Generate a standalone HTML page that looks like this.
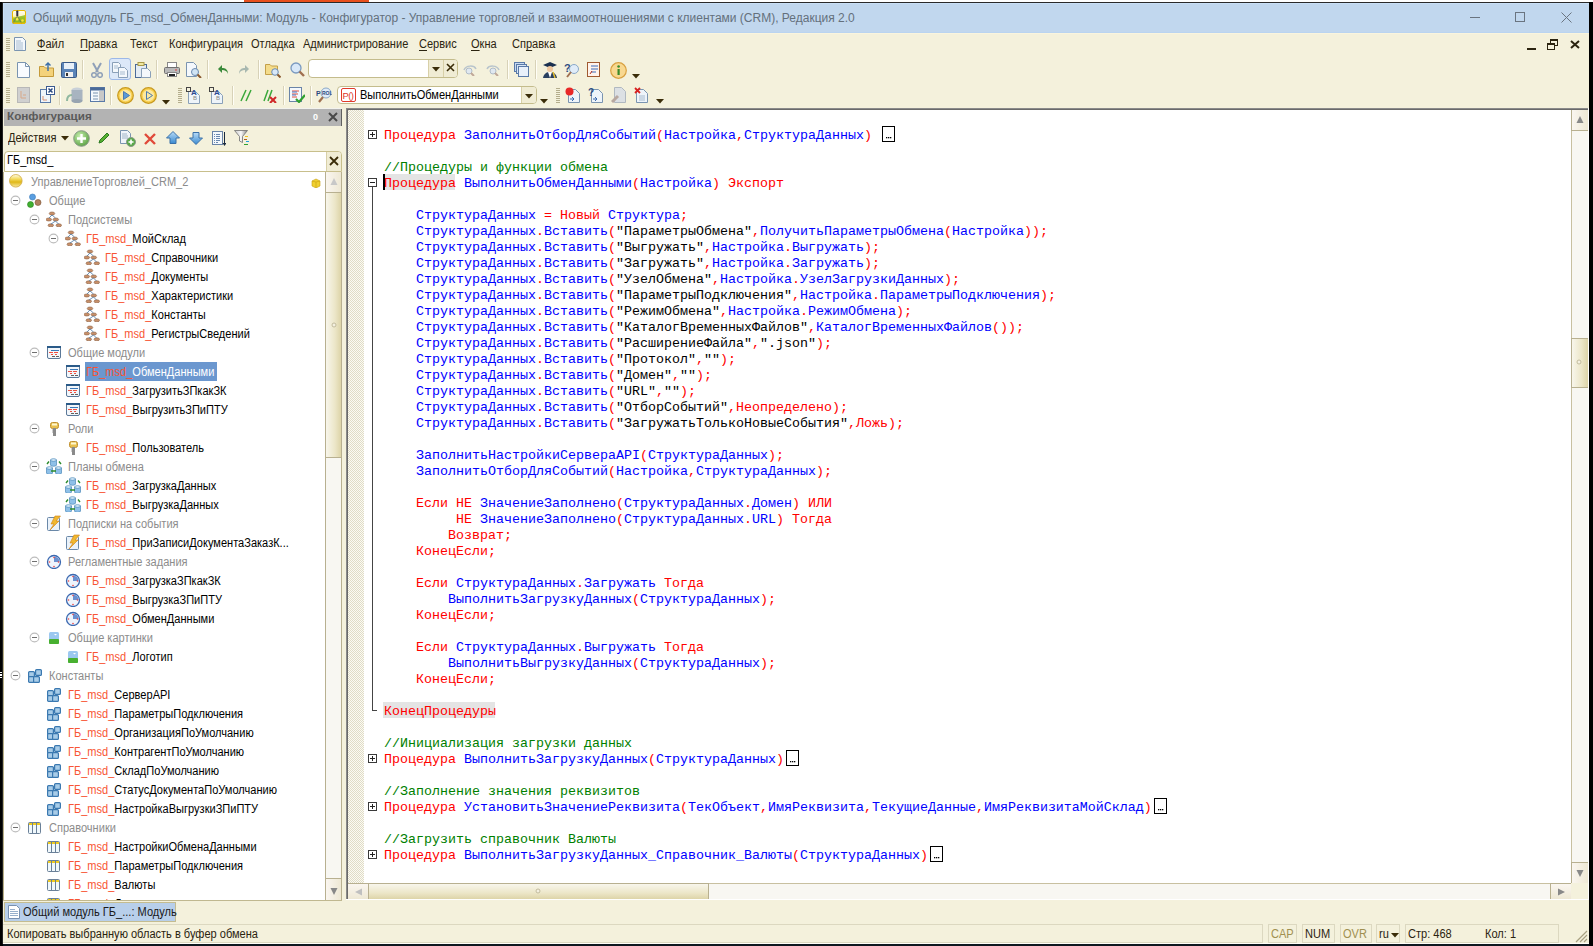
<!DOCTYPE html><html><head><meta charset="utf-8"><style>
*{margin:0;padding:0;box-sizing:border-box}
html,body{width:1593px;height:946px;overflow:hidden;background:#000}
body{position:relative;font-family:"Liberation Sans",sans-serif;font-size:11px;color:#000}
.t{position:absolute;white-space:nowrap}
.a{position:absolute}
.code{position:absolute;left:384px;font-family:"Liberation Mono",monospace;font-size:13.33px;line-height:16px;white-space:pre;color:#000}
.k{color:#f00}.i{color:#00f}.c{color:#008000}
.tr{position:absolute;height:19px;line-height:19px;white-space:nowrap;font-size:12px;transform:scaleX(.92);transform-origin:0 0}
.g{color:#8c8c8c}.r{color:#f85535}
.mn{position:absolute;top:37px;height:15px;line-height:15px;color:#2b2410;font-size:12px;transform:scaleX(.92);transform-origin:0 0}
.mn u{text-decoration:underline;text-decoration-thickness:1px;text-underline-offset:2px}
</style></head><body>
<div style="position:absolute;left:0px;top:0px;width:1593px;height:2px;background:#fff"></div>
<div style="position:absolute;left:244px;top:0px;width:125px;height:2px;background:#e8501e"></div>
<div style="position:absolute;left:0px;top:2px;width:1593px;height:1px;background:#2a2a2a"></div>
<div style="position:absolute;left:3px;top:3px;width:1586px;height:941px;background:#F4F1DC"></div>
<div style="position:absolute;left:0px;top:944px;width:1593px;height:2px;background:#0f1820"></div>
<div style="position:absolute;left:3px;top:3px;width:1586px;height:30px;background:#C1D7EE"></div>
<div style="position:absolute;left:3px;top:32px;width:1586px;height:1px;background:#BAD4F0"></div>
<div style="position:absolute;left:3px;top:33px;width:1586px;height:1px;background:#FAF5DE"></div>
<div style="position:absolute;left:3px;top:3px;width:1586px;height:1px;background:#C9E0F7"></div>
<div style="position:absolute;left:3px;top:3px;width:1px;height:30px;background:#C9E0F7"></div>
<div class="t" style="left:33px;top:11px;height:14px;line-height:14px;font-size:12px;color:#64707c">Общий модуль ГБ_msd_ОбменДанными: Модуль - Конфигуратор - Управление торговлей и взаимоотношениями с клиентами (CRM), Редакция 2.0</div>
<svg class="a" style="left:12px;top:10px" width="14" height="14" viewBox="0 0 14 14">
<defs><linearGradient id="ai" x1="0" y1="0" x2="0" y2="1"><stop offset="0" stop-color="#fffef0"/><stop offset=".45" stop-color="#fff4c0"/><stop offset=".5" stop-color="#e8e040"/><stop offset="1" stop-color="#60a818"/></linearGradient></defs>
<rect x=".5" y=".5" width="13" height="13" rx="1.5" fill="url(#ai)" stroke="#e8b800"/>
<path d="M1 9C4 6 8 7 13 5V13H1Z" fill="#88bc20" opacity=".8"/>
<circle cx="5" cy="9" r="1.6" fill="#f8f040"/><circle cx="10.5" cy="10.5" r="1.3" fill="#f8e040"/>
<rect x="4.3" y=".5" width="2" height="6" rx=".8" fill="#303040"/>
<path d="M4.8 6.5L1 13.5M5.8 6.5L9.5 13.5" stroke="#707060" stroke-width=".8"/>
<rect x="1" y="12.5" width="12" height="1" fill="#f0c000"/>
</svg>
<div style="position:absolute;left:1470px;top:17px;width:10px;height:1px;background:#6a7480"></div>
<div style="position:absolute;left:1515px;top:12px;width:10px;height:10px;border:1px solid #6a7480"></div>
<svg class="a" style="left:1561px;top:12px" width="11" height="11"><path d="M0.5 0.5L10.5 10.5M10.5 0.5L0.5 10.5" stroke="#6a7480" stroke-width="1"/></svg>
<div style="position:absolute;left:6px;top:38px;width:4px;height:1px;background:#b4ad8c"></div><div style="position:absolute;left:6px;top:40px;width:4px;height:1px;background:#b4ad8c"></div><div style="position:absolute;left:6px;top:42px;width:4px;height:1px;background:#b4ad8c"></div><div style="position:absolute;left:6px;top:44px;width:4px;height:1px;background:#b4ad8c"></div><div style="position:absolute;left:6px;top:46px;width:4px;height:1px;background:#b4ad8c"></div><div style="position:absolute;left:6px;top:48px;width:4px;height:1px;background:#b4ad8c"></div><div style="position:absolute;left:6px;top:50px;width:4px;height:1px;background:#b4ad8c"></div>
<svg class="a" style="left:14px;top:37px" width="12" height="14"><path d="M.5 .5H8.5L11.5 3.5V13.5H.5Z" fill="#f4f8fc" stroke="#7a94b0"/><path d="M2 4H7M2 6H9M2 8H9M2 10H9M2 12H9" stroke="#a8bcd0"/></svg>
<div class="mn" style="left:37px"><u>Ф</u>айл</div>
<div class="mn" style="left:80px"><u>П</u>равка</div>
<div class="mn" style="left:130px">Текст</div>
<div class="mn" style="left:169px">Конфигурация</div>
<div class="mn" style="left:251px">Отладка</div>
<div class="mn" style="left:303px">Администрирование</div>
<div class="mn" style="left:419px"><u>С</u>ервис</div>
<div class="mn" style="left:471px"><u>О</u>кна</div>
<div class="mn" style="left:512px">Сп<u>р</u>авка</div>
<div style="position:absolute;left:1527px;top:48px;width:9px;height:2px;background:#2b2410"></div>
<div style="position:absolute;left:1550px;top:39px;width:8px;height:7px;border:1px solid #2b2410;border-top-width:2px"></div>
<div style="position:absolute;left:1547px;top:43px;width:8px;height:7px;border:1px solid #2b2410;border-top-width:2px;background:#F4F1DC"></div>
<svg class="a" style="left:1570px;top:40px" width="10" height="9"><path d="M1 1L9 8M9 1L1 8" stroke="#2b2410" stroke-width="2"/></svg>
<div style="position:absolute;left:6px;top:62px;width:4px;height:1px;background:#b4ad8c"></div><div style="position:absolute;left:6px;top:64px;width:4px;height:1px;background:#b4ad8c"></div><div style="position:absolute;left:6px;top:66px;width:4px;height:1px;background:#b4ad8c"></div><div style="position:absolute;left:6px;top:68px;width:4px;height:1px;background:#b4ad8c"></div><div style="position:absolute;left:6px;top:70px;width:4px;height:1px;background:#b4ad8c"></div><div style="position:absolute;left:6px;top:72px;width:4px;height:1px;background:#b4ad8c"></div><div style="position:absolute;left:6px;top:74px;width:4px;height:1px;background:#b4ad8c"></div><div style="position:absolute;left:6px;top:76px;width:4px;height:1px;background:#b4ad8c"></div>
<div style="position:absolute;left:6px;top:88px;width:4px;height:1px;background:#b4ad8c"></div><div style="position:absolute;left:6px;top:90px;width:4px;height:1px;background:#b4ad8c"></div><div style="position:absolute;left:6px;top:92px;width:4px;height:1px;background:#b4ad8c"></div><div style="position:absolute;left:6px;top:94px;width:4px;height:1px;background:#b4ad8c"></div><div style="position:absolute;left:6px;top:96px;width:4px;height:1px;background:#b4ad8c"></div><div style="position:absolute;left:6px;top:98px;width:4px;height:1px;background:#b4ad8c"></div><div style="position:absolute;left:6px;top:100px;width:4px;height:1px;background:#b4ad8c"></div><div style="position:absolute;left:6px;top:102px;width:4px;height:1px;background:#b4ad8c"></div>
<svg class="a" style="left:17px;top:62px" width="13" height="16" viewBox="0 0 13 16"><path d="M.5 .5H8.5L12.5 4.5V15.5H.5Z" fill="#f8fbff" stroke="#7a94b0"/><path d="M8.5 .5V4.5H12.5" fill="none" stroke="#7a94b0"/></svg>
<svg class="a" style="left:39px;top:62px" width="15" height="15" viewBox="0 0 15 15"><path d="M.5 4.5H5L6.5 6H14.5V14.5H.5Z" fill="#f4d27a" stroke="#c49a3a"/><path d="M9 9V1M6.5 3.5L9 1L11.5 3.5" stroke="#3a6ea8" stroke-width="1.4" fill="none"/></svg>
<svg class="a" style="left:61px;top:62px" width="16" height="16" viewBox="0 0 16 16"><rect x=".5" y=".5" width="15" height="15" rx="1" fill="#5a84b8" stroke="#3a5a88"/><rect x="3" y="1" width="10" height="6" fill="#e8f0f8"/><rect x="4" y="10" width="8" height="5" fill="#f0f0f0"/><rect x="5" y="11" width="2" height="3" fill="#333"/></svg>
<div style="position:absolute;left:82px;top:60px;width:1px;height:19px;background:#d8d2b8"></div><div style="position:absolute;left:83px;top:60px;width:1px;height:19px;background:#fffef6"></div>
<svg class="a" style="left:91px;top:62px" width="12" height="16" viewBox="0 0 12 16"><path d="M2 1L7 10M10 1L5 10" stroke="#8fa0b8" stroke-width="2"/><circle cx="3" cy="13" r="2.3" fill="none" stroke="#8fa0b8" stroke-width="1.5"/><circle cx="9" cy="13" r="2.3" fill="none" stroke="#8fa0b8" stroke-width="1.5"/></svg>
<div style="position:absolute;left:109px;top:58px;width:22px;height:22px;background:#dce8f8;border:1px solid #9cb8e8;border-radius:3px"></div>
<svg class="a" style="left:112px;top:62px" width="16" height="16" viewBox="0 0 16 16"><path d="M.5 .5H6.5L8.5 2.5V10.5H.5Z" fill="#f4f8fc" stroke="#8aa0b8"/><path d="M6.5 5.5H12.5L15.5 8.5V15.5H6.5Z" fill="#f4f8fc" stroke="#8aa0b8"/><path d="M2 4H6M2 6H6M8 10H13M8 12H13" stroke="#a8bcd0"/></svg>
<svg class="a" style="left:135px;top:62px" width="16" height="16" viewBox="0 0 16 16"><rect x=".5" y="2.5" width="11" height="13" fill="#e4ecf4" stroke="#4a6a98"/><rect x="3" y=".5" width="6" height="3" fill="#f0e8a0" stroke="#a89848"/><path d="M6.5 6.5H12.5L15.5 9.5V15.5H6.5Z" fill="#f4f8fc" stroke="#8aa0b8"/></svg>
<div style="position:absolute;left:156px;top:60px;width:1px;height:19px;background:#d8d2b8"></div><div style="position:absolute;left:157px;top:60px;width:1px;height:19px;background:#fffef6"></div>
<svg class="a" style="left:164px;top:62px" width="16" height="15" viewBox="0 0 16 15"><rect x="3.5" y=".5" width="9" height="5" fill="#fff" stroke="#888"/><rect x=".5" y="5.5" width="15" height="6" rx="1" fill="#b8b8b8" stroke="#707070"/><rect x="3.5" y="10.5" width="9" height="4" fill="#fff" stroke="#888"/><rect x="5" y="12" width="6" height="2" fill="#222"/><circle cx="12" cy="8" r=".8" fill="#e03030"/></svg>
<svg class="a" style="left:186px;top:62px" width="16" height="16" viewBox="0 0 16 16"><path d="M.5 .5H7.5L10.5 3.5V14.5H.5Z" fill="#f4f8fc" stroke="#7a94b0"/><circle cx="9" cy="10" r="3.5" fill="#d0e4f4" stroke="#6a8ab0"/><path d="M11.5 12.5L15 16" stroke="#8a5a30" stroke-width="2"/></svg>
<div style="position:absolute;left:207px;top:60px;width:1px;height:19px;background:#d8d2b8"></div><div style="position:absolute;left:208px;top:60px;width:1px;height:19px;background:#fffef6"></div>
<svg class="a" style="left:218px;top:64px" width="11" height="11" viewBox="0 0 11 11"><path d="M10 10C10 5 7 4 4 4V1L0 5L4 9V6C7 6 9 7 10 10Z" fill="#3a8a3a"/></svg>
<svg class="a" style="left:238px;top:64px" width="11" height="11" viewBox="0 0 11 11"><path d="M1 10C1 5 4 4 7 4V1L11 5L7 9V6C4 6 2 7 1 10Z" fill="#a8b8b0"/></svg>
<div style="position:absolute;left:258px;top:60px;width:1px;height:19px;background:#d8d2b8"></div><div style="position:absolute;left:259px;top:60px;width:1px;height:19px;background:#fffef6"></div>
<svg class="a" style="left:265px;top:62px" width="16" height="16" viewBox="0 0 16 16"><path d="M.5 2.5H5L6.5 4H12.5V12.5H.5Z" fill="#f4dc8a" stroke="#c4a048"/><circle cx="10" cy="10" r="3.3" fill="#d8e8f8" stroke="#6a8ab0"/><path d="M12.5 12.5L15.5 15.5" stroke="#8a5a30" stroke-width="2"/></svg>
<svg class="a" style="left:290px;top:62px" width="15" height="15" viewBox="0 0 15 15"><circle cx="6" cy="6" r="5" fill="#d8e8f8" stroke="#7a9ac0" stroke-width="1.3"/><path d="M9.5 9.5L14 14" stroke="#a07050" stroke-width="2.4"/></svg>
<div style="position:absolute;left:308px;top:59px;width:150px;height:19px;background:#fff;border:1px solid #c4bc8c;border-radius:4px"></div>
<div style="position:absolute;left:428px;top:60px;width:1px;height:17px;background:#d8d0a8"></div>
<div style="position:absolute;left:429px;top:60px;width:14px;height:17px;background:#f0ecd4"></div>
<div style="position:absolute;left:443px;top:60px;width:1px;height:17px;background:#d8d0a8"></div>
<div style="position:absolute;left:444px;top:60px;width:13px;height:17px;background:#f0ecd4;border-radius:0 3px 3px 0"></div>
<svg class="a" style="left:432px;top:67px" width="8" height="5" viewBox="0 0 8 5"><path d="M0 0H8L4 4.5Z" fill="#3a2c08"/></svg>
<svg class="a" style="left:446px;top:63px" width="9" height="9" viewBox="0 0 9 9"><path d="M1 1L8 8M8 1L1 8" stroke="#3a2c08" stroke-width="1.6"/></svg>
<svg class="a" style="left:462px;top:64px" width="16" height="12" viewBox="0 0 16 12"><path d="M2 6C4 1 12 1 14 5" stroke="#b8c4cc" stroke-width="1.5" fill="none"/><circle cx="7" cy="7" r="3" fill="#e0e8f0" stroke="#b0bcc8"/><path d="M9 9L12 12" stroke="#c0a898" stroke-width="2"/></svg>
<svg class="a" style="left:485px;top:64px" width="16" height="12" viewBox="0 0 16 12"><path d="M2 5C4 1 12 1 14 6" stroke="#b8c4cc" stroke-width="1.5" fill="none"/><circle cx="8" cy="7" r="3" fill="#e0e8f0" stroke="#b0bcc8"/><path d="M10 9L13 12" stroke="#c0a898" stroke-width="2"/></svg>
<div style="position:absolute;left:507px;top:60px;width:1px;height:19px;background:#d8d2b8"></div><div style="position:absolute;left:508px;top:60px;width:1px;height:19px;background:#fffef6"></div>
<svg class="a" style="left:514px;top:62px" width="15" height="15" viewBox="0 0 15 15"><rect x=".5" y=".5" width="10" height="9" fill="#c8daf0" stroke="#5a7aa8"/><rect x="2.5" y="2.5" width="10" height="9" fill="#d8e6f6" stroke="#5a7aa8"/><rect x="4.5" y="4.5" width="10" height="10" fill="#e8f0fa" stroke="#5a7aa8"/></svg>
<div style="position:absolute;left:535px;top:60px;width:1px;height:19px;background:#d8d2b8"></div><div style="position:absolute;left:536px;top:60px;width:1px;height:19px;background:#fffef6"></div>
<svg class="a" style="left:542px;top:62px" width="16" height="16" viewBox="0 0 16 16"><path d="M1 3L8 0L15 3L8 6Z" fill="#1a3050"/><circle cx="8" cy="7" r="3" fill="#f0c8a0"/><path d="M1 16C2 11 5 10 8 10C11 10 14 11 15 16Z" fill="#2a4060"/><path d="M6 10L8 16L10 10" fill="#fff"/><path d="M11 10L13 16" stroke="#e8c030" stroke-width="1.5"/></svg>
<svg class="a" style="left:564px;top:62px" width="17" height="16" viewBox="0 0 17 16"><text x="0" y="10" font-family="Liberation Sans" font-weight="bold" font-size="11" fill="#2a4a80">?</text><circle cx="10" cy="7" r="4.5" fill="#e0ecf8" stroke="#8aa8c8"/><path d="M7 10L3 15" stroke="#a07050" stroke-width="2"/></svg>
<svg class="a" style="left:587px;top:62px" width="14" height="15" viewBox="0 0 14 15"><rect x=".5" y=".5" width="12" height="14" fill="#fff4ec" stroke="#a05a30"/><path d="M4 4H11M4 7H11M4 10H9" stroke="#3a6ab8"/><path d="M3 12L5 9" stroke="#c03020"/></svg>
<svg class="a" style="left:610px;top:62px" width="17" height="17" viewBox="0 0 17 17"><circle cx="8.5" cy="8.5" r="7.8" fill="#f8d890" stroke="#d8a040" stroke-width="1.2"/><rect x="7.5" y="7" width="2.2" height="6" fill="#3a8a2a"/><circle cx="8.6" cy="4.5" r="1.3" fill="#3a8a2a"/></svg>
<svg class="a" style="left:632px;top:74px" width="8" height="5" viewBox="0 0 8 5"><path d="M0 0H8L4 4.5Z" fill="#3a2c08"/></svg>
<svg class="a" style="left:17px;top:87px" width="13" height="16" viewBox="0 0 13 16"><rect x=".5" y=".5" width="12" height="15" fill="#d0d0d0" stroke="#b8b8b8"/><path d="M4 4V11H9M6 8H9" stroke="#d8a888" fill="none"/></svg>
<svg class="a" style="left:40px;top:86px" width="15" height="17" viewBox="0 0 15 17"><rect x=".5" y="3.5" width="10" height="13" fill="#eef4fa" stroke="#5a7aa8"/><rect x="6.5" y=".5" width="8" height="8" fill="#fff" stroke="#3a5a90"/><path d="M8.5 2.5L12.5 6.5M12.5 2.5L8.5 6.5" stroke="#2a4a80" stroke-width="1.5"/><path d="M3 10V14H7" stroke="#d89070" fill="none"/></svg>
<div style="position:absolute;left:59px;top:86px;width:1px;height:19px;background:#d8d2b8"></div><div style="position:absolute;left:60px;top:86px;width:1px;height:19px;background:#fffef6"></div>
<svg class="a" style="left:66px;top:87px" width="17" height="16" viewBox="0 0 17 16"><ellipse cx="11" cy="3" rx="5.5" ry="2.5" fill="#c8d0d8"/><rect x="5.5" y="3" width="11" height="11" fill="#a8b4c0"/><ellipse cx="11" cy="14" rx="5.5" ry="2" fill="#98a4b0"/><path d="M1 14C1 10 3 8 6 8" stroke="#90b8a0" stroke-width="2" fill="none"/></svg>
<svg class="a" style="left:90px;top:87px" width="15" height="15" viewBox="0 0 15 15"><rect x=".5" y=".5" width="14" height="14" fill="#f4f8fc" stroke="#5a7aa8"/><rect x=".5" y=".5" width="14" height="3" fill="#4a6a98"/><rect x="9" y="4" width="5" height="10" fill="#c8c8c8"/><path d="M3 6H8M3 9H8M3 12H8" stroke="#7a94b0"/></svg>
<div style="position:absolute;left:110px;top:86px;width:1px;height:19px;background:#d8d2b8"></div><div style="position:absolute;left:111px;top:86px;width:1px;height:19px;background:#fffef6"></div>
<svg class="a" style="left:117px;top:87px" width="17" height="17" viewBox="0 0 17 17"><circle cx="8.5" cy="8.5" r="7.8" fill="#f8d050" stroke="#c89a20" stroke-width="1.2"/><circle cx="8.5" cy="8.5" r="5.8" fill="#fce8a0"/><path d="M6.5 4.5L12.5 8.5L6.5 12.5Z" fill="#5a9ad8" stroke="#4a7ab0"/></svg>
<svg class="a" style="left:140px;top:87px" width="17" height="17" viewBox="0 0 17 17"><circle cx="8.5" cy="8.5" r="7.8" fill="#f8d050" stroke="#c89a20" stroke-width="1.2"/><circle cx="8.5" cy="8.5" r="5.8" fill="#fce8a0"/><path d="M6.5 4.5L12.5 8.5L6.5 12.5Z" fill="none" stroke="#4a7ab0"/></svg>
<svg class="a" style="left:162px;top:100px" width="8" height="5" viewBox="0 0 8 5"><path d="M0 0H8L4 4.5Z" fill="#3a2c08"/></svg>
<div style="position:absolute;left:178px;top:88px;width:4px;height:1px;background:#b4ad8c"></div><div style="position:absolute;left:178px;top:90px;width:4px;height:1px;background:#b4ad8c"></div><div style="position:absolute;left:178px;top:92px;width:4px;height:1px;background:#b4ad8c"></div><div style="position:absolute;left:178px;top:94px;width:4px;height:1px;background:#b4ad8c"></div><div style="position:absolute;left:178px;top:96px;width:4px;height:1px;background:#b4ad8c"></div><div style="position:absolute;left:178px;top:98px;width:4px;height:1px;background:#b4ad8c"></div><div style="position:absolute;left:178px;top:100px;width:4px;height:1px;background:#b4ad8c"></div><div style="position:absolute;left:178px;top:102px;width:4px;height:1px;background:#b4ad8c"></div>
<svg class="a" style="left:186px;top:87px" width="15" height="17" viewBox="0 0 15 17"><path d="M2.5 4.5H9.5L13.5 8.5V16.5H2.5Z" fill="#eef4fa" stroke="#8aa0b8"/><rect x=".5" y=".5" width="4" height="4" fill="none" stroke="#444"/><text x="5" y="8" font-family="Liberation Sans" font-weight="bold" font-size="8" fill="#2a4a90">A</text><text x="7" y="13" font-family="Liberation Sans" font-size="6" fill="#888">B</text></svg>
<svg class="a" style="left:209px;top:87px" width="15" height="17" viewBox="0 0 15 17"><path d="M2.5 4.5H9.5L13.5 8.5V16.5H2.5Z" fill="#eef4fa" stroke="#8aa0b8"/><rect x=".5" y=".5" width="4" height="4" fill="none" stroke="#444"/><text x="5" y="8" font-family="Liberation Sans" font-weight="bold" font-size="8" fill="#2a4a90">A</text><text x="7" y="13" font-family="Liberation Sans" font-size="6" fill="#888">B</text></svg>
<div style="position:absolute;left:232px;top:86px;width:1px;height:19px;background:#d8d2b8"></div><div style="position:absolute;left:233px;top:86px;width:1px;height:19px;background:#fffef6"></div>
<svg class="a" style="left:240px;top:89px" width="12" height="13" viewBox="0 0 12 13"><path d="M1 12L6 1M6 12L11 1" stroke="#3aa83a" stroke-width="1.5"/></svg>
<svg class="a" style="left:263px;top:89px" width="14" height="14" viewBox="0 0 14 14"><path d="M1 12L5 1M5 12L9 1" stroke="#3aa83a" stroke-width="1.5"/><path d="M7 8L13 14M13 8L7 14" stroke="#d02828" stroke-width="2"/></svg>
<div style="position:absolute;left:283px;top:86px;width:1px;height:19px;background:#d8d2b8"></div><div style="position:absolute;left:284px;top:86px;width:1px;height:19px;background:#fffef6"></div>
<svg class="a" style="left:289px;top:87px" width="16" height="16" viewBox="0 0 16 16"><rect x=".5" y=".5" width="12" height="14" fill="#f4f8fc" stroke="#6a84a8"/><path d="M3 4H10M3 7H9M3 10H8" stroke="#e05040"/><path d="M3 5H8M3 8H7" stroke="#4a7ac8"/><path d="M7 12L10 15L16 8" stroke="#30a030" stroke-width="2.2" fill="none"/></svg>
<div style="position:absolute;left:310px;top:86px;width:1px;height:19px;background:#d8d2b8"></div><div style="position:absolute;left:311px;top:86px;width:1px;height:19px;background:#fffef6"></div>
<svg class="a" style="left:316px;top:87px" width="16" height="16" viewBox="0 0 16 16"><text x="0" y="9" font-family="Liberation Sans" font-weight="bold" font-size="7" fill="#2a4a80">P</text><circle cx="10" cy="6" r="5" fill="#e0ecf8" stroke="#8aa8c8"/><text x="6" y="8" font-family="Liberation Sans" font-weight="bold" font-size="5" fill="#2a4a80">ROL</text><path d="M7 10L3 15" stroke="#a07050" stroke-width="2.2"/></svg>
<div style="position:absolute;left:337px;top:86px;width:200px;height:18px;background:#fff;border:1px solid #c4bc8c;border-radius:4px"></div>
<div style="position:absolute;left:521px;top:87px;width:1px;height:16px;background:#d8d0a8"></div>
<div style="position:absolute;left:522px;top:87px;width:14px;height:16px;background:#f0ecd4;border-radius:0 3px 3px 0"></div>
<svg class="a" style="left:525px;top:94px" width="8" height="5" viewBox="0 0 8 5"><path d="M0 0H8L4 4.5Z" fill="#3a2c08"/></svg>
<svg class="a" style="left:341px;top:88px" width="15" height="14" viewBox="0 0 15 14"><rect x=".5" y=".5" width="14" height="13" rx="1.5" fill="#fff" stroke="#e03a2a"/><text x="1.5" y="11" font-family="Liberation Sans" font-size="9.5" letter-spacing="-.6" fill="#e03a2a">P()</text></svg>
<div class="t" style="left:360px;top:88px;height:14px;line-height:14px;font-size:12px;transform:scaleX(.92);transform-origin:0 0;color:#000">ВыполнитьОбменДанными</div>
<svg class="a" style="left:540px;top:99px" width="8" height="5" viewBox="0 0 8 5"><path d="M0 0H8L4 4.5Z" fill="#3a2c08"/></svg>
<div style="position:absolute;left:556px;top:88px;width:4px;height:1px;background:#b4ad8c"></div><div style="position:absolute;left:556px;top:90px;width:4px;height:1px;background:#b4ad8c"></div><div style="position:absolute;left:556px;top:92px;width:4px;height:1px;background:#b4ad8c"></div><div style="position:absolute;left:556px;top:94px;width:4px;height:1px;background:#b4ad8c"></div><div style="position:absolute;left:556px;top:96px;width:4px;height:1px;background:#b4ad8c"></div><div style="position:absolute;left:556px;top:98px;width:4px;height:1px;background:#b4ad8c"></div><div style="position:absolute;left:556px;top:100px;width:4px;height:1px;background:#b4ad8c"></div><div style="position:absolute;left:556px;top:102px;width:4px;height:1px;background:#b4ad8c"></div>
<svg class="a" style="left:565px;top:87px" width="15" height="16" viewBox="0 0 15 16"><path d="M3.5 2.5H10.5L14.5 6.5V15.5H3.5Z" fill="#eef4fa" stroke="#7a94b0"/><circle cx="4.5" cy="4.5" r="4" fill="#e82828"/><path d="M5 12H9M7 10L9 12L7 14" stroke="#3a6ab0" fill="none"/></svg>
<svg class="a" style="left:588px;top:87px" width="15" height="16" viewBox="0 0 15 16"><path d="M3.5 2.5H10.5L14.5 6.5V15.5H3.5Z" fill="#eef4fa" stroke="#7a94b0"/><text x="0" y="9" font-family="Liberation Sans" font-weight="bold" font-size="10" fill="#2a4a80">?</text><path d="M5 12H9M7 10L9 12L7 14" stroke="#3a6ab0" fill="none"/></svg>
<svg class="a" style="left:611px;top:87px" width="15" height="16" viewBox="0 0 15 16"><path d="M3.5 .5H10.5L14.5 4.5V15.5H3.5Z" fill="#dce0e4" stroke="#b0b8c0"/><path d="M1 15L7 9" stroke="#b8a8a0" stroke-width="3"/></svg>
<svg class="a" style="left:634px;top:87px" width="14" height="16" viewBox="0 0 14 16"><path d="M2.5 2.5H9.5L13.5 6.5V15.5H2.5Z" fill="#eef4fa" stroke="#7a94b0"/><path d="M1 1L6 6M6 1L1 6" stroke="#d82020" stroke-width="1.8"/><path d="M5 9H11M5 11H11M5 13H11" stroke="#a8bcd0"/></svg>
<svg class="a" style="left:656px;top:99px" width="8" height="5" viewBox="0 0 8 5"><path d="M0 0H8L4 4.5Z" fill="#3a2c08"/></svg>
<div style="position:absolute;left:4px;top:108px;width:338px;height:1px;background:#f2f2ee"></div>
<div style="position:absolute;left:4px;top:109px;width:338px;height:17px;background:#B3B3B3"></div>
<div style="position:absolute;left:341px;top:109px;width:1px;height:17px;background:#606060"></div>
<div class="t" style="left:7px;top:108px;height:15px;line-height:15px;font-weight:bold;font-size:11.7px;color:#5a5a5a">Конфигурация</div>
<div class="t" style="left:313px;top:110px;height:14px;line-height:14px;font-size:9px;color:#fff;font-weight:bold">0</div>
<svg class="a" style="left:328px;top:112px" width="10" height="10" viewBox="0 0 10 10"><path d="M1 1L9 9M9 1L1 9" stroke="#4a4a4a" stroke-width="2"/></svg>
<div class="t" style="left:8px;top:131px;height:14px;line-height:14px;font-size:12px;transform:scaleX(.92);transform-origin:0 0;color:#2b2410">Действия</div>
<svg class="a" style="left:61px;top:136px" width="8" height="5" viewBox="0 0 8 5"><path d="M0 0H8L4 4.5Z" fill="#3a2c08"/></svg>
<svg class="a" style="left:73px;top:130px" width="17" height="17" viewBox="0 0 17 17"><defs><radialGradient id="gp" cx=".4" cy=".35" r=".7"><stop offset="0" stop-color="#c8f0b0"/><stop offset="1" stop-color="#58a040"/></radialGradient></defs><circle cx="8.5" cy="8.5" r="7.8" fill="url(#gp)" stroke="#8a9a8a"/><path d="M8.5 4V13M4 8.5H13" stroke="#fff" stroke-width="2.4"/></svg>
<svg class="a" style="left:98px;top:132px" width="12" height="12" viewBox="0 0 12 12"><path d="M1 11L2 8L9 1L11 3L4 10Z" fill="#58b030" stroke="#2a7a20"/></svg>
<svg class="a" style="left:120px;top:130px" width="16" height="17" viewBox="0 0 16 17"><path d="M.5 .5H7.5L10.5 3.5V13.5H.5Z" fill="#f0f4fa" stroke="#7a94b0"/><path d="M2 4H7M2 6H8M2 8H8" stroke="#a0b4c8"/><circle cx="11" cy="12" r="4.5" fill="#58a848" stroke="#8a9a8a"/><path d="M11 9.5V14.5M8.5 12H13.5" stroke="#fff" stroke-width="1.6"/></svg>
<svg class="a" style="left:144px;top:133px" width="12" height="12" viewBox="0 0 12 12"><path d="M1 1L11 11M11 1L1 11" stroke="#e04a3a" stroke-width="2.4"/></svg>
<svg class="a" style="left:166px;top:131px" width="14" height="13" viewBox="0 0 14 13"><defs><linearGradient id="ag" x1="0" y1="0" x2="0" y2="1"><stop offset="0" stop-color="#b8dcf8"/><stop offset="1" stop-color="#3a8ad0"/></linearGradient></defs><path d="M7 .5L13.5 7H10V12.5H4V7H.5Z" fill="url(#ag)" stroke="#3a70a8"/></svg>
<svg class="a" style="left:189px;top:132px" width="14" height="13" viewBox="0 0 14 13"><path d="M7 12.5L13.5 6H10V.5H4V6H.5Z" fill="url(#ag)" stroke="#3a70a8"/></svg>
<svg class="a" style="left:212px;top:131px" width="14" height="16" viewBox="0 0 14 16"><rect x=".5" y=".5" width="10" height="13" fill="#f4f8fc" stroke="#6a84a8"/><path d="M2 3.5H3M4 3.5H8M2 5.5H3M4 5.5H8M2 7.5H3M4 7.5H8M2 9.5H3M4 9.5H8M2 11.5H3M4 11.5H6" stroke="#6a88b0"/><path d="M12.5 1V14" stroke="#1a2a40"/><path d="M10.5 12L12.5 15L14.5 12Z" fill="#1a2a40"/></svg>
<svg class="a" style="left:234px;top:130px" width="17" height="16" viewBox="0 0 17 16"><defs><linearGradient id="fg" x1="0" y1="0" x2="1" y2="0"><stop offset="0" stop-color="#c8c8c8"/><stop offset=".5" stop-color="#f8f8f8"/><stop offset="1" stop-color="#808080"/></linearGradient></defs><path d="M.5 .5H13.5L8.5 6.5V12.5L5.5 11V6.5Z" fill="url(#fg)" stroke="#707070" stroke-width=".8"/><path d="M11 6.5H14M10 9.5H13M12 11.5H15M10 14.5H14" stroke-width="1.2"/><path d="M11 6.5H14" stroke="#f0c020"/><path d="M10 9.5H13" stroke="#b06020"/><path d="M12 11.5H15" stroke="#20a0e0"/><path d="M10 14.5H14" stroke="#30a030"/></svg>
<div style="position:absolute;left:4px;top:151px;width:338px;height:21px;background:#fff;border:1px solid #c8bf8c;border-radius:4px 4px 0 0"></div>
<div class="t" style="left:7px;top:153px;height:15px;line-height:15px;font-size:12px;transform:scaleX(.92);transform-origin:0 0;color:#000">ГБ_msd_</div>
<div style="position:absolute;left:326px;top:152px;width:1px;height:19px;background:#d8d0a8"></div>
<div style="position:absolute;left:327px;top:152px;width:14px;height:19px;background:#f0ecd4;border-radius:0 3px 0 0"></div>
<svg class="a" style="left:329px;top:156px" width="10" height="10" viewBox="0 0 10 10"><path d="M1 1L9 9M9 1L1 9" stroke="#3a2c08" stroke-width="1.8"/></svg>
<div style="position:absolute;left:4px;top:172px;width:338px;height:729px;background:#fff"></div>
<div style="position:absolute;left:3px;top:900px;width:339px;height:1px;background:#c0b890"></div>
<div style="position:absolute;left:3px;top:172px;width:1px;height:728px;background:#b8b088"></div>
<div class="a" style="left:4px;top:172px;width:321px;height:728px;overflow:hidden">
<svg class="a" style="left:5px;top:2px" width="16" height="16" viewBox="0 0 16 16"><defs><linearGradient id="rg" x1="0" y1="0" x2="0" y2="1"><stop offset="0" stop-color="#fffce8"/><stop offset=".35" stop-color="#f4dc60"/><stop offset=".6" stop-color="#e0b818"/><stop offset="1" stop-color="#f8e8a0"/></linearGradient></defs><circle cx="6.8" cy="6.8" r="6.3" fill="url(#rg)" stroke="#d0a840" stroke-width=".8"/></svg>
<div class="tr g" style="left:26.5px;top:1px">УправлениеТорговлей_CRM_2</div>
<svg class="a" style="left:6px;top:23px" width="11" height="11"><circle cx="5.5" cy="5.5" r="4.4" fill="#fff" stroke="#bcbcbc" stroke-width="1.1"/><path d="M3 5.5H8" stroke="#707070"/></svg>
<svg class="a" style="left:23px;top:20px" width="16" height="16" viewBox="0 0 16 16"><circle cx="5.5" cy="5" r="3" fill="#5a9ee0" stroke="#3a7ab8" stroke-width=".6"/><circle cx="11" cy="10.5" r="3" fill="#b08060" stroke="#7a5030" stroke-width=".6"/><circle cx="3.5" cy="12.5" r="3" fill="#40b030" stroke="#288020" stroke-width=".6"/></svg>
<div class="tr g" style="left:45.0px;top:20px">Общие</div>
<svg class="a" style="left:25px;top:42px" width="11" height="11"><circle cx="5.5" cy="5.5" r="4.4" fill="#fff" stroke="#bcbcbc" stroke-width="1.1"/><path d="M3 5.5H8" stroke="#707070"/></svg>
<svg class="a" style="left:42px;top:39px" width="16" height="16" viewBox="0 0 16 16"><g fill="#c8906a" stroke="#8a5a3a" stroke-width=".6"><ellipse cx="6" cy="2.5" rx="2.8" ry="1.5"/><ellipse cx="2.8" cy="8.5" rx="2.8" ry="1.5"/><ellipse cx="9.8" cy="8.5" rx="2.8" ry="1.5"/><ellipse cx="4.8" cy="14.3" rx="2.8" ry="1.5"/><ellipse cx="12.8" cy="14.3" rx="2.8" ry="1.5"/></g><path d="M6 4L3 7M6 4L9.5 7M9.5 10L5 13M9.5 10L12.5 13" stroke="#4a7aa8" stroke-width=".8" fill="none"/></svg>
<div class="tr g" style="left:63.5px;top:39px">Подсистемы</div>
<svg class="a" style="left:44px;top:61px" width="11" height="11"><circle cx="5.5" cy="5.5" r="4.4" fill="#fff" stroke="#bcbcbc" stroke-width="1.1"/><path d="M3 5.5H8" stroke="#707070"/></svg>
<svg class="a" style="left:61px;top:58px" width="16" height="16" viewBox="0 0 16 16"><g fill="#c8906a" stroke="#8a5a3a" stroke-width=".6"><ellipse cx="6" cy="2.5" rx="2.8" ry="1.5"/><ellipse cx="2.8" cy="8.5" rx="2.8" ry="1.5"/><ellipse cx="9.8" cy="8.5" rx="2.8" ry="1.5"/><ellipse cx="4.8" cy="14.3" rx="2.8" ry="1.5"/><ellipse cx="12.8" cy="14.3" rx="2.8" ry="1.5"/></g><path d="M6 4L3 7M6 4L9.5 7M9.5 10L5 13M9.5 10L12.5 13" stroke="#4a7aa8" stroke-width=".8" fill="none"/></svg>
<div class="tr" style="left:82.0px;top:58px"><span class="r">ГБ_msd_</span>МойСклад</div>
<svg class="a" style="left:80px;top:77px" width="16" height="16" viewBox="0 0 16 16"><g fill="#c8906a" stroke="#8a5a3a" stroke-width=".6"><ellipse cx="6" cy="2.5" rx="2.8" ry="1.5"/><ellipse cx="2.8" cy="8.5" rx="2.8" ry="1.5"/><ellipse cx="9.8" cy="8.5" rx="2.8" ry="1.5"/><ellipse cx="4.8" cy="14.3" rx="2.8" ry="1.5"/><ellipse cx="12.8" cy="14.3" rx="2.8" ry="1.5"/></g><path d="M6 4L3 7M6 4L9.5 7M9.5 10L5 13M9.5 10L12.5 13" stroke="#4a7aa8" stroke-width=".8" fill="none"/></svg>
<div class="tr" style="left:100.5px;top:77px"><span class="r">ГБ_msd_</span>Справочники</div>
<svg class="a" style="left:80px;top:96px" width="16" height="16" viewBox="0 0 16 16"><g fill="#c8906a" stroke="#8a5a3a" stroke-width=".6"><ellipse cx="6" cy="2.5" rx="2.8" ry="1.5"/><ellipse cx="2.8" cy="8.5" rx="2.8" ry="1.5"/><ellipse cx="9.8" cy="8.5" rx="2.8" ry="1.5"/><ellipse cx="4.8" cy="14.3" rx="2.8" ry="1.5"/><ellipse cx="12.8" cy="14.3" rx="2.8" ry="1.5"/></g><path d="M6 4L3 7M6 4L9.5 7M9.5 10L5 13M9.5 10L12.5 13" stroke="#4a7aa8" stroke-width=".8" fill="none"/></svg>
<div class="tr" style="left:100.5px;top:96px"><span class="r">ГБ_msd_</span>Документы</div>
<svg class="a" style="left:80px;top:115px" width="16" height="16" viewBox="0 0 16 16"><g fill="#c8906a" stroke="#8a5a3a" stroke-width=".6"><ellipse cx="6" cy="2.5" rx="2.8" ry="1.5"/><ellipse cx="2.8" cy="8.5" rx="2.8" ry="1.5"/><ellipse cx="9.8" cy="8.5" rx="2.8" ry="1.5"/><ellipse cx="4.8" cy="14.3" rx="2.8" ry="1.5"/><ellipse cx="12.8" cy="14.3" rx="2.8" ry="1.5"/></g><path d="M6 4L3 7M6 4L9.5 7M9.5 10L5 13M9.5 10L12.5 13" stroke="#4a7aa8" stroke-width=".8" fill="none"/></svg>
<div class="tr" style="left:100.5px;top:115px"><span class="r">ГБ_msd_</span>Характеристики</div>
<svg class="a" style="left:80px;top:134px" width="16" height="16" viewBox="0 0 16 16"><g fill="#c8906a" stroke="#8a5a3a" stroke-width=".6"><ellipse cx="6" cy="2.5" rx="2.8" ry="1.5"/><ellipse cx="2.8" cy="8.5" rx="2.8" ry="1.5"/><ellipse cx="9.8" cy="8.5" rx="2.8" ry="1.5"/><ellipse cx="4.8" cy="14.3" rx="2.8" ry="1.5"/><ellipse cx="12.8" cy="14.3" rx="2.8" ry="1.5"/></g><path d="M6 4L3 7M6 4L9.5 7M9.5 10L5 13M9.5 10L12.5 13" stroke="#4a7aa8" stroke-width=".8" fill="none"/></svg>
<div class="tr" style="left:100.5px;top:134px"><span class="r">ГБ_msd_</span>Константы</div>
<svg class="a" style="left:80px;top:153px" width="16" height="16" viewBox="0 0 16 16"><g fill="#c8906a" stroke="#8a5a3a" stroke-width=".6"><ellipse cx="6" cy="2.5" rx="2.8" ry="1.5"/><ellipse cx="2.8" cy="8.5" rx="2.8" ry="1.5"/><ellipse cx="9.8" cy="8.5" rx="2.8" ry="1.5"/><ellipse cx="4.8" cy="14.3" rx="2.8" ry="1.5"/><ellipse cx="12.8" cy="14.3" rx="2.8" ry="1.5"/></g><path d="M6 4L3 7M6 4L9.5 7M9.5 10L5 13M9.5 10L12.5 13" stroke="#4a7aa8" stroke-width=".8" fill="none"/></svg>
<div class="tr" style="left:100.5px;top:153px"><span class="r">ГБ_msd_</span>РегистрыСведений</div>
<svg class="a" style="left:25px;top:175px" width="11" height="11"><circle cx="5.5" cy="5.5" r="4.4" fill="#fff" stroke="#bcbcbc" stroke-width="1.1"/><path d="M3 5.5H8" stroke="#707070"/></svg>
<svg class="a" style="left:42px;top:172px" width="16" height="16" viewBox="0 0 16 16"><rect x="1.5" y="2.5" width="13" height="12" rx="1.5" fill="#f2f6fa" stroke="#5a7898"/><rect x="1" y="2" width="14" height="2" fill="#2a5a88"/><path d="M5 6.5H13" stroke="#3a78b8"/><path d="M3 8.5H7M8 8.5H12" stroke="#f05040"/><path d="M5 10.5H7M9 10.5H11" stroke="#f05040"/><path d="M6 12.5H9M10 12.5H13" stroke="#606060"/></svg>
<div class="tr g" style="left:63.5px;top:172px">Общие модули</div>
<svg class="a" style="left:61px;top:191px" width="16" height="16" viewBox="0 0 16 16"><rect x="1.5" y="2.5" width="13" height="12" rx="1.5" fill="#f2f6fa" stroke="#5a7898"/><rect x="1" y="2" width="14" height="2" fill="#2a5a88"/><path d="M5 6.5H13" stroke="#3a78b8"/><path d="M3 8.5H7M8 8.5H12" stroke="#f05040"/><path d="M5 10.5H7M9 10.5H11" stroke="#f05040"/><path d="M6 12.5H9M10 12.5H13" stroke="#606060"/></svg>
<div style="position:absolute;left:81.0px;top:190px;width:132px;height:19px;background:#6b97cf"></div>
<div class="tr" style="left:82.0px;top:191px"><span class="r">ГБ_msd_</span><span style="color:#fff">ОбменДанными</span></div>
<svg class="a" style="left:61px;top:210px" width="16" height="16" viewBox="0 0 16 16"><rect x="1.5" y="2.5" width="13" height="12" rx="1.5" fill="#f2f6fa" stroke="#5a7898"/><rect x="1" y="2" width="14" height="2" fill="#2a5a88"/><path d="M5 6.5H13" stroke="#3a78b8"/><path d="M3 8.5H7M8 8.5H12" stroke="#f05040"/><path d="M5 10.5H7M9 10.5H11" stroke="#f05040"/><path d="M6 12.5H9M10 12.5H13" stroke="#606060"/></svg>
<div class="tr" style="left:82.0px;top:210px"><span class="r">ГБ_msd_</span>ЗагрузитьЗПкакЗК</div>
<svg class="a" style="left:61px;top:229px" width="16" height="16" viewBox="0 0 16 16"><rect x="1.5" y="2.5" width="13" height="12" rx="1.5" fill="#f2f6fa" stroke="#5a7898"/><rect x="1" y="2" width="14" height="2" fill="#2a5a88"/><path d="M5 6.5H13" stroke="#3a78b8"/><path d="M3 8.5H7M8 8.5H12" stroke="#f05040"/><path d="M5 10.5H7M9 10.5H11" stroke="#f05040"/><path d="M6 12.5H9M10 12.5H13" stroke="#606060"/></svg>
<div class="tr" style="left:82.0px;top:229px"><span class="r">ГБ_msd_</span>ВыгрузитьЗПиПТУ</div>
<svg class="a" style="left:25px;top:251px" width="11" height="11"><circle cx="5.5" cy="5.5" r="4.4" fill="#fff" stroke="#bcbcbc" stroke-width="1.1"/><path d="M3 5.5H8" stroke="#707070"/></svg>
<svg class="a" style="left:42px;top:248px" width="16" height="16" viewBox="0 0 16 16"><rect x="4.5" y="2.5" width="8" height="6" rx="2" fill="#e8c050" stroke="#c09030"/><rect x="6" y="3.5" width="5" height="2" fill="#fff8d0"/><rect x="7" y="8" width="3" height="8" fill="#8a8a8a"/><path d="M7 10H6M7 12H6" stroke="#a0a0a0"/></svg>
<div class="tr g" style="left:63.5px;top:248px">Роли</div>
<svg class="a" style="left:61px;top:267px" width="16" height="16" viewBox="0 0 16 16"><rect x="4.5" y="2.5" width="8" height="6" rx="2" fill="#e8c050" stroke="#c09030"/><rect x="6" y="3.5" width="5" height="2" fill="#fff8d0"/><rect x="7" y="8" width="3" height="8" fill="#8a8a8a"/><path d="M7 10H6M7 12H6" stroke="#a0a0a0"/></svg>
<div class="tr" style="left:82.0px;top:267px"><span class="r">ГБ_msd_</span>Пользователь</div>
<svg class="a" style="left:25px;top:289px" width="11" height="11"><circle cx="5.5" cy="5.5" r="4.4" fill="#fff" stroke="#bcbcbc" stroke-width="1.1"/><path d="M3 5.5H8" stroke="#707070"/></svg>
<svg class="a" style="left:42px;top:286px" width="16" height="16" viewBox="0 0 16 16"><g fill="#8ec0e8" stroke="#4a88b8" stroke-width=".7"><path d="M4.5 2V7A3 1.3 0 0 0 10.5 7V2Z"/><ellipse cx="7.5" cy="2" rx="3" ry="1.3" fill="#d8ecfa"/><path d="M.5 10V15A3 1.3 0 0 0 6.5 15V10Z"/><ellipse cx="3.5" cy="10" rx="3" ry="1.3" fill="#d8ecfa"/><path d="M9.5 10V15A3 1.3 0 0 0 15.5 15V10Z"/><ellipse cx="12.5" cy="10" rx="3" ry="1.3" fill="#d8ecfa"/></g><path d="M1 6L3 3.5M13 3.5L15 6M5 13L10 13" stroke="#2a8a2a" stroke-width="1.4"/></svg>
<div class="tr g" style="left:63.5px;top:286px">Планы обмена</div>
<svg class="a" style="left:61px;top:305px" width="16" height="16" viewBox="0 0 16 16"><g fill="#8ec0e8" stroke="#4a88b8" stroke-width=".7"><path d="M4.5 2V7A3 1.3 0 0 0 10.5 7V2Z"/><ellipse cx="7.5" cy="2" rx="3" ry="1.3" fill="#d8ecfa"/><path d="M.5 10V15A3 1.3 0 0 0 6.5 15V10Z"/><ellipse cx="3.5" cy="10" rx="3" ry="1.3" fill="#d8ecfa"/><path d="M9.5 10V15A3 1.3 0 0 0 15.5 15V10Z"/><ellipse cx="12.5" cy="10" rx="3" ry="1.3" fill="#d8ecfa"/></g><path d="M1 6L3 3.5M13 3.5L15 6M5 13L10 13" stroke="#2a8a2a" stroke-width="1.4"/></svg>
<div class="tr" style="left:82.0px;top:305px"><span class="r">ГБ_msd_</span>ЗагрузкаДанных</div>
<svg class="a" style="left:61px;top:324px" width="16" height="16" viewBox="0 0 16 16"><g fill="#8ec0e8" stroke="#4a88b8" stroke-width=".7"><path d="M4.5 2V7A3 1.3 0 0 0 10.5 7V2Z"/><ellipse cx="7.5" cy="2" rx="3" ry="1.3" fill="#d8ecfa"/><path d="M.5 10V15A3 1.3 0 0 0 6.5 15V10Z"/><ellipse cx="3.5" cy="10" rx="3" ry="1.3" fill="#d8ecfa"/><path d="M9.5 10V15A3 1.3 0 0 0 15.5 15V10Z"/><ellipse cx="12.5" cy="10" rx="3" ry="1.3" fill="#d8ecfa"/></g><path d="M1 6L3 3.5M13 3.5L15 6M5 13L10 13" stroke="#2a8a2a" stroke-width="1.4"/></svg>
<div class="tr" style="left:82.0px;top:324px"><span class="r">ГБ_msd_</span>ВыгрузкаДанных</div>
<svg class="a" style="left:25px;top:346px" width="11" height="11"><circle cx="5.5" cy="5.5" r="4.4" fill="#fff" stroke="#bcbcbc" stroke-width="1.1"/><path d="M3 5.5H8" stroke="#707070"/></svg>
<svg class="a" style="left:42px;top:343px" width="16" height="16" viewBox="0 0 16 16"><rect x="1.5" y="2.5" width="12" height="13" rx="1" fill="#eaf2fa" stroke="#6a88a8"/><path d="M14.5 1H9L5 9H8L4 15L13 6H10Z" fill="#f0b830" stroke="#d08010" stroke-width=".6"/></svg>
<div class="tr g" style="left:63.5px;top:343px">Подписки на события</div>
<svg class="a" style="left:61px;top:362px" width="16" height="16" viewBox="0 0 16 16"><rect x="1.5" y="2.5" width="12" height="13" rx="1" fill="#eaf2fa" stroke="#6a88a8"/><path d="M14.5 1H9L5 9H8L4 15L13 6H10Z" fill="#f0b830" stroke="#d08010" stroke-width=".6"/></svg>
<div class="tr" style="left:82.0px;top:362px"><span class="r">ГБ_msd_</span>ПриЗаписиДокументаЗаказК...</div>
<svg class="a" style="left:25px;top:384px" width="11" height="11"><circle cx="5.5" cy="5.5" r="4.4" fill="#fff" stroke="#bcbcbc" stroke-width="1.1"/><path d="M3 5.5H8" stroke="#707070"/></svg>
<svg class="a" style="left:42px;top:381px" width="16" height="16" viewBox="0 0 16 16"><circle cx="8" cy="9" r="6.5" fill="#eef4fc" stroke="#3a68b0" stroke-width="1.3"/><path d="M8 9V3.5A5.5 5.5 0 0 1 13.5 9Z" fill="#6a90d0"/><circle cx="8" cy="4.5" r=".8" fill="#f04040"/><circle cx="8" cy="13.5" r=".8" fill="#f04040"/><circle cx="3.5" cy="9" r=".8" fill="#f04040"/><circle cx="12.5" cy="9" r=".8" fill="#f04040"/></svg>
<div class="tr g" style="left:63.5px;top:381px">Регламентные задания</div>
<svg class="a" style="left:61px;top:400px" width="16" height="16" viewBox="0 0 16 16"><circle cx="8" cy="9" r="6.5" fill="#eef4fc" stroke="#3a68b0" stroke-width="1.3"/><path d="M8 9V3.5A5.5 5.5 0 0 1 13.5 9Z" fill="#6a90d0"/><circle cx="8" cy="4.5" r=".8" fill="#f04040"/><circle cx="8" cy="13.5" r=".8" fill="#f04040"/><circle cx="3.5" cy="9" r=".8" fill="#f04040"/><circle cx="12.5" cy="9" r=".8" fill="#f04040"/></svg>
<div class="tr" style="left:82.0px;top:400px"><span class="r">ГБ_msd_</span>ЗагрузкаЗПкакЗК</div>
<svg class="a" style="left:61px;top:419px" width="16" height="16" viewBox="0 0 16 16"><circle cx="8" cy="9" r="6.5" fill="#eef4fc" stroke="#3a68b0" stroke-width="1.3"/><path d="M8 9V3.5A5.5 5.5 0 0 1 13.5 9Z" fill="#6a90d0"/><circle cx="8" cy="4.5" r=".8" fill="#f04040"/><circle cx="8" cy="13.5" r=".8" fill="#f04040"/><circle cx="3.5" cy="9" r=".8" fill="#f04040"/><circle cx="12.5" cy="9" r=".8" fill="#f04040"/></svg>
<div class="tr" style="left:82.0px;top:419px"><span class="r">ГБ_msd_</span>ВыгрузкаЗПиПТУ</div>
<svg class="a" style="left:61px;top:438px" width="16" height="16" viewBox="0 0 16 16"><circle cx="8" cy="9" r="6.5" fill="#eef4fc" stroke="#3a68b0" stroke-width="1.3"/><path d="M8 9V3.5A5.5 5.5 0 0 1 13.5 9Z" fill="#6a90d0"/><circle cx="8" cy="4.5" r=".8" fill="#f04040"/><circle cx="8" cy="13.5" r=".8" fill="#f04040"/><circle cx="3.5" cy="9" r=".8" fill="#f04040"/><circle cx="12.5" cy="9" r=".8" fill="#f04040"/></svg>
<div class="tr" style="left:82.0px;top:438px"><span class="r">ГБ_msd_</span>ОбменДанными</div>
<svg class="a" style="left:25px;top:460px" width="11" height="11"><circle cx="5.5" cy="5.5" r="4.4" fill="#fff" stroke="#bcbcbc" stroke-width="1.1"/><path d="M3 5.5H8" stroke="#707070"/></svg>
<svg class="a" style="left:42px;top:457px" width="16" height="16" viewBox="0 0 16 16"><rect x="3" y="3" width="10" height="12" rx="1.5" fill="#9cc8f0"/><rect x="3" y="10" width="10" height="5" rx="1" fill="#48b030"/><path d="M8 5H11L9.5 6.5Z" fill="#fff"/></svg>
<div class="tr g" style="left:63.5px;top:457px">Общие картинки</div>
<svg class="a" style="left:61px;top:476px" width="16" height="16" viewBox="0 0 16 16"><rect x="3" y="3" width="10" height="12" rx="1.5" fill="#9cc8f0"/><rect x="3" y="10" width="10" height="5" rx="1" fill="#48b030"/><path d="M8 5H11L9.5 6.5Z" fill="#fff"/></svg>
<div class="tr" style="left:82.0px;top:476px"><span class="r">ГБ_msd_</span>Логотип</div>
<svg class="a" style="left:6px;top:498px" width="11" height="11"><circle cx="5.5" cy="5.5" r="4.4" fill="#fff" stroke="#bcbcbc" stroke-width="1.1"/><path d="M3 5.5H8" stroke="#707070"/></svg>
<svg class="a" style="left:23px;top:495px" width="16" height="16" viewBox="0 0 16 16"><g fill="#a8cce8" stroke="#3a78b0" stroke-width="1.2"><rect x="8.6" y="2.6" width="5.8" height="5.8" rx="1"/><rect x="1.6" y="4.6" width="5.8" height="5.8" rx="1"/><rect x="1.6" y="9.6" width="5.8" height="5.8" rx="1"/><rect x="6.6" y="9.6" width="5.8" height="5.8" rx="1"/></g></svg>
<div class="tr g" style="left:45.0px;top:495px">Константы</div>
<svg class="a" style="left:42px;top:514px" width="16" height="16" viewBox="0 0 16 16"><g fill="#a8cce8" stroke="#3a78b0" stroke-width="1.2"><rect x="8.6" y="2.6" width="5.8" height="5.8" rx="1"/><rect x="1.6" y="4.6" width="5.8" height="5.8" rx="1"/><rect x="1.6" y="9.6" width="5.8" height="5.8" rx="1"/><rect x="6.6" y="9.6" width="5.8" height="5.8" rx="1"/></g></svg>
<div class="tr" style="left:63.5px;top:514px"><span class="r">ГБ_msd_</span>СерверAPI</div>
<svg class="a" style="left:42px;top:533px" width="16" height="16" viewBox="0 0 16 16"><g fill="#a8cce8" stroke="#3a78b0" stroke-width="1.2"><rect x="8.6" y="2.6" width="5.8" height="5.8" rx="1"/><rect x="1.6" y="4.6" width="5.8" height="5.8" rx="1"/><rect x="1.6" y="9.6" width="5.8" height="5.8" rx="1"/><rect x="6.6" y="9.6" width="5.8" height="5.8" rx="1"/></g></svg>
<div class="tr" style="left:63.5px;top:533px"><span class="r">ГБ_msd_</span>ПараметрыПодключения</div>
<svg class="a" style="left:42px;top:552px" width="16" height="16" viewBox="0 0 16 16"><g fill="#a8cce8" stroke="#3a78b0" stroke-width="1.2"><rect x="8.6" y="2.6" width="5.8" height="5.8" rx="1"/><rect x="1.6" y="4.6" width="5.8" height="5.8" rx="1"/><rect x="1.6" y="9.6" width="5.8" height="5.8" rx="1"/><rect x="6.6" y="9.6" width="5.8" height="5.8" rx="1"/></g></svg>
<div class="tr" style="left:63.5px;top:552px"><span class="r">ГБ_msd_</span>ОрганизацияПоУмолчанию</div>
<svg class="a" style="left:42px;top:571px" width="16" height="16" viewBox="0 0 16 16"><g fill="#a8cce8" stroke="#3a78b0" stroke-width="1.2"><rect x="8.6" y="2.6" width="5.8" height="5.8" rx="1"/><rect x="1.6" y="4.6" width="5.8" height="5.8" rx="1"/><rect x="1.6" y="9.6" width="5.8" height="5.8" rx="1"/><rect x="6.6" y="9.6" width="5.8" height="5.8" rx="1"/></g></svg>
<div class="tr" style="left:63.5px;top:571px"><span class="r">ГБ_msd_</span>КонтрагентПоУмолчанию</div>
<svg class="a" style="left:42px;top:590px" width="16" height="16" viewBox="0 0 16 16"><g fill="#a8cce8" stroke="#3a78b0" stroke-width="1.2"><rect x="8.6" y="2.6" width="5.8" height="5.8" rx="1"/><rect x="1.6" y="4.6" width="5.8" height="5.8" rx="1"/><rect x="1.6" y="9.6" width="5.8" height="5.8" rx="1"/><rect x="6.6" y="9.6" width="5.8" height="5.8" rx="1"/></g></svg>
<div class="tr" style="left:63.5px;top:590px"><span class="r">ГБ_msd_</span>СкладПоУмолчанию</div>
<svg class="a" style="left:42px;top:609px" width="16" height="16" viewBox="0 0 16 16"><g fill="#a8cce8" stroke="#3a78b0" stroke-width="1.2"><rect x="8.6" y="2.6" width="5.8" height="5.8" rx="1"/><rect x="1.6" y="4.6" width="5.8" height="5.8" rx="1"/><rect x="1.6" y="9.6" width="5.8" height="5.8" rx="1"/><rect x="6.6" y="9.6" width="5.8" height="5.8" rx="1"/></g></svg>
<div class="tr" style="left:63.5px;top:609px"><span class="r">ГБ_msd_</span>СтатусДокументаПоУмолчанию</div>
<svg class="a" style="left:42px;top:628px" width="16" height="16" viewBox="0 0 16 16"><g fill="#a8cce8" stroke="#3a78b0" stroke-width="1.2"><rect x="8.6" y="2.6" width="5.8" height="5.8" rx="1"/><rect x="1.6" y="4.6" width="5.8" height="5.8" rx="1"/><rect x="1.6" y="9.6" width="5.8" height="5.8" rx="1"/><rect x="6.6" y="9.6" width="5.8" height="5.8" rx="1"/></g></svg>
<div class="tr" style="left:63.5px;top:628px"><span class="r">ГБ_msd_</span>НастройкаВыгрузкиЗПиПТУ</div>
<svg class="a" style="left:6px;top:650px" width="11" height="11"><circle cx="5.5" cy="5.5" r="4.4" fill="#fff" stroke="#bcbcbc" stroke-width="1.1"/><path d="M3 5.5H8" stroke="#707070"/></svg>
<svg class="a" style="left:23px;top:647px" width="16" height="16" viewBox="0 0 16 16"><rect x="1.5" y="3.5" width="12" height="11" rx="1" fill="#f0f8fc" stroke="#6a8098"/><rect x="2" y="4" width="11" height="2" fill="#f0cc20"/><path d="M5.5 3.5V14.5M9.5 3.5V14.5" stroke="#6a8098"/></svg>
<div class="tr g" style="left:45.0px;top:647px">Справочники</div>
<svg class="a" style="left:42px;top:666px" width="16" height="16" viewBox="0 0 16 16"><rect x="1.5" y="3.5" width="12" height="11" rx="1" fill="#f0f8fc" stroke="#6a8098"/><rect x="2" y="4" width="11" height="2" fill="#f0cc20"/><path d="M5.5 3.5V14.5M9.5 3.5V14.5" stroke="#6a8098"/></svg>
<div class="tr" style="left:63.5px;top:666px"><span class="r">ГБ_msd_</span>НастройкиОбменаДанными</div>
<svg class="a" style="left:42px;top:685px" width="16" height="16" viewBox="0 0 16 16"><rect x="1.5" y="3.5" width="12" height="11" rx="1" fill="#f0f8fc" stroke="#6a8098"/><rect x="2" y="4" width="11" height="2" fill="#f0cc20"/><path d="M5.5 3.5V14.5M9.5 3.5V14.5" stroke="#6a8098"/></svg>
<div class="tr" style="left:63.5px;top:685px"><span class="r">ГБ_msd_</span>ПараметрыПодключения</div>
<svg class="a" style="left:42px;top:704px" width="16" height="16" viewBox="0 0 16 16"><rect x="1.5" y="3.5" width="12" height="11" rx="1" fill="#f0f8fc" stroke="#6a8098"/><rect x="2" y="4" width="11" height="2" fill="#f0cc20"/><path d="M5.5 3.5V14.5M9.5 3.5V14.5" stroke="#6a8098"/></svg>
<div class="tr" style="left:63.5px;top:704px"><span class="r">ГБ_msd_</span>Валюты</div>
<svg class="a" style="left:42px;top:723px" width="16" height="16" viewBox="0 0 16 16"><rect x="1.5" y="3.5" width="12" height="11" rx="1" fill="#f0f8fc" stroke="#6a8098"/><rect x="2" y="4" width="11" height="2" fill="#f0cc20"/><path d="M5.5 3.5V14.5M9.5 3.5V14.5" stroke="#6a8098"/></svg>
<div class="tr" style="left:63.5px;top:723px"><span class="r">ГБ_msd_</span>Данные</div>
</div>
<svg class="a" style="left:311px;top:178px" width="10" height="10" viewBox="0 0 10 10"><path d="M1 3L5 1L9 3V8L5 10L1 8Z" fill="#f0d030" stroke="#c8a010" stroke-width=".6"/><path d="M5 4V10M1 3L5 4L9 3" stroke="#c8a010" stroke-width=".6" fill="none"/></svg>
<div style="position:absolute;left:325px;top:172px;width:17px;height:728px;background:#f8f7f2;border-left:1px solid #b8b090;border-right:1px solid #b8b090"></div>
<div style="position:absolute;left:325px;top:172px;width:17px;height:21px;background:linear-gradient(90deg,#faf6f0,#eee8d4);border:1px solid #b8b090;border-top:none"></div>
<svg class="a" style="left:330px;top:178px" width="8" height="7" viewBox="0 0 8 7"><path d="M4 0L7.5 7H.5Z" fill="#c8c8c8"/></svg>
<div style="position:absolute;left:325px;top:192px;width:17px;height:266px;background:linear-gradient(90deg,#f8f6ec,#ece6c8 60%,#ddd4a8);border:1px solid #b8b090"></div>
<div style="position:absolute;left:325px;top:878px;width:17px;height:22px;background:linear-gradient(90deg,#faf6f0,#eee8d4);border:1px solid #b8b090;border-bottom:none"></div>
<svg class="a" style="left:330px;top:888px" width="8" height="7" viewBox="0 0 8 7"><path d="M.5 0H7.5L4 7Z" fill="#888"/></svg>
<div style="position:absolute;left:346px;top:108px;width:1243px;height:792px;background:#fff"></div>
<div style="position:absolute;left:346px;top:108px;width:1243px;height:1px;background:#8a8a8a"></div>
<div style="position:absolute;left:346px;top:109px;width:1243px;height:1px;background:#6a6a6a"></div>
<div style="position:absolute;left:346px;top:108px;width:1px;height:792px;background:#8a8a8a"></div>
<div style="position:absolute;left:347px;top:109px;width:1px;height:791px;background:#6a6a6a"></div>
<svg class="a" style="left:348px;top:110px" width="16" height="773"><defs><pattern id="ck" width="2" height="2" patternUnits="userSpaceOnUse"><rect width="2" height="2" fill="#fbfaf4"/><rect width="1" height="1" fill="#e0dcc6"/><rect x="1" y="1" width="1" height="1" fill="#e0dcc6"/></pattern></defs><rect width="16" height="773" fill="url(#ck)"/></svg>
<div style="position:absolute;left:383px;top:174px;width:72px;height:16px;background:#e4e4e4"></div>
<div style="position:absolute;left:383px;top:702px;width:112px;height:16px;background:#e4e4e4"></div>
<div class="code" style="top:128px"><span class="k">Процедура</span> <span class="i">ЗаполнитьОтборДляСобытий</span><span class="k">(</span><span class="i">Настройка</span><span class="k">,</span><span class="i">СтруктураДанных</span><span class="k">)</span>

<span class="c">//Процедуры и функции обмена</span>
<span class="k">Процедура</span> <span class="i">ВыполнитьОбменДанными</span><span class="k">(</span><span class="i">Настройка</span><span class="k">)</span> <span class="k">Экспорт</span>

    <span class="i">СтруктураДанных</span> <span class="k">=</span> <span class="k">Новый</span> <span class="i">Структура</span><span class="k">;</span>
    <span class="i">СтруктураДанных</span><span class="k">.</span><span class="i">Вставить</span><span class="k">(</span>&quot;ПараметрыОбмена&quot;<span class="k">,</span><span class="i">ПолучитьПараметрыОбмена</span><span class="k">(</span><span class="i">Настройка</span><span class="k">)</span><span class="k">);</span>
    <span class="i">СтруктураДанных</span><span class="k">.</span><span class="i">Вставить</span><span class="k">(</span>&quot;Выгружать&quot;<span class="k">,</span><span class="i">Настройка</span><span class="k">.</span><span class="i">Выгружать</span><span class="k">);</span>
    <span class="i">СтруктураДанных</span><span class="k">.</span><span class="i">Вставить</span><span class="k">(</span>&quot;Загружать&quot;<span class="k">,</span><span class="i">Настройка</span><span class="k">.</span><span class="i">Загружать</span><span class="k">);</span>
    <span class="i">СтруктураДанных</span><span class="k">.</span><span class="i">Вставить</span><span class="k">(</span>&quot;УзелОбмена&quot;<span class="k">,</span><span class="i">Настройка</span><span class="k">.</span><span class="i">УзелЗагрузкиДанных</span><span class="k">);</span>
    <span class="i">СтруктураДанных</span><span class="k">.</span><span class="i">Вставить</span><span class="k">(</span>&quot;ПараметрыПодключения&quot;<span class="k">,</span><span class="i">Настройка</span><span class="k">.</span><span class="i">ПараметрыПодключения</span><span class="k">);</span>
    <span class="i">СтруктураДанных</span><span class="k">.</span><span class="i">Вставить</span><span class="k">(</span>&quot;РежимОбмена&quot;<span class="k">,</span><span class="i">Настройка</span><span class="k">.</span><span class="i">РежимОбмена</span><span class="k">);</span>
    <span class="i">СтруктураДанных</span><span class="k">.</span><span class="i">Вставить</span><span class="k">(</span>&quot;КаталогВременныхФайлов&quot;<span class="k">,</span><span class="i">КаталогВременныхФайлов</span><span class="k">()</span><span class="k">);</span>
    <span class="i">СтруктураДанных</span><span class="k">.</span><span class="i">Вставить</span><span class="k">(</span>&quot;РасширениеФайла&quot;<span class="k">,</span>&quot;.json&quot;<span class="k">);</span>
    <span class="i">СтруктураДанных</span><span class="k">.</span><span class="i">Вставить</span><span class="k">(</span>&quot;Протокол&quot;<span class="k">,</span>&quot;&quot;<span class="k">);</span>
    <span class="i">СтруктураДанных</span><span class="k">.</span><span class="i">Вставить</span><span class="k">(</span>&quot;Домен&quot;<span class="k">,</span>&quot;&quot;<span class="k">);</span>
    <span class="i">СтруктураДанных</span><span class="k">.</span><span class="i">Вставить</span><span class="k">(</span>&quot;URL&quot;<span class="k">,</span>&quot;&quot;<span class="k">);</span>
    <span class="i">СтруктураДанных</span><span class="k">.</span><span class="i">Вставить</span><span class="k">(</span>&quot;ОтборСобытий&quot;<span class="k">,</span><span class="k">Неопределено</span><span class="k">);</span>
    <span class="i">СтруктураДанных</span><span class="k">.</span><span class="i">Вставить</span><span class="k">(</span>&quot;ЗагружатьТолькоНовыеСобытия&quot;<span class="k">,</span><span class="k">Ложь</span><span class="k">);</span>

    <span class="i">ЗаполнитьНастройкиСервераAPI</span><span class="k">(</span><span class="i">СтруктураДанных</span><span class="k">);</span>
    <span class="i">ЗаполнитьОтборДляСобытий</span><span class="k">(</span><span class="i">Настройка</span><span class="k">,</span><span class="i">СтруктураДанных</span><span class="k">);</span>

    <span class="k">Если</span> <span class="k">НЕ</span> <span class="i">ЗначениеЗаполнено</span><span class="k">(</span><span class="i">СтруктураДанных</span><span class="k">.</span><span class="i">Домен</span><span class="k">)</span> <span class="k">ИЛИ</span>
         <span class="k">НЕ</span> <span class="i">ЗначениеЗаполнено</span><span class="k">(</span><span class="i">СтруктураДанных</span><span class="k">.</span><span class="i">URL</span><span class="k">)</span> <span class="k">Тогда</span>
        <span class="k">Возврат;</span>
    <span class="k">КонецЕсли;</span>

    <span class="k">Если</span> <span class="i">СтруктураДанных</span><span class="k">.</span><span class="i">Загружать</span> <span class="k">Тогда</span>
        <span class="i">ВыполнитьЗагрузкуДанных</span><span class="k">(</span><span class="i">СтруктураДанных</span><span class="k">);</span>
    <span class="k">КонецЕсли;</span>

    <span class="k">Если</span> <span class="i">СтруктураДанных</span><span class="k">.</span><span class="i">Выгружать</span> <span class="k">Тогда</span>
        <span class="i">ВыполнитьВыгрузкуДанных</span><span class="k">(</span><span class="i">СтруктураДанных</span><span class="k">);</span>
    <span class="k">КонецЕсли;</span>

<span class="k">КонецПроцедуры</span>

<span class="c">//Инициализация загрузки данных</span>
<span class="k">Процедура</span> <span class="i">ВыполнитьЗагрузкуДанных</span><span class="k">(</span><span class="i">СтруктураДанных</span><span class="k">)</span>

<span class="c">//Заполнение значения реквизитов</span>
<span class="k">Процедура</span> <span class="i">УстановитьЗначениеРеквизита</span><span class="k">(</span><span class="i">ТекОбъект</span><span class="k">,</span><span class="i">ИмяРеквизита</span><span class="k">,</span><span class="i">ТекущиеДанные</span><span class="k">,</span><span class="i">ИмяРеквизитаМойСклад</span><span class="k">)</span>

<span class="c">//Загрузить справочник Валюты</span>
<span class="k">Процедура</span> <span class="i">ВыполнитьЗагрузкуДанных_Справочник_Валюты</span><span class="k">(</span><span class="i">СтруктураДанных</span><span class="k">)</span></div>
<div style="position:absolute;left:383px;top:174px;width:2px;height:16px;background:#000"></div>
<svg class="a" style="left:368px;top:130px" width="9" height="9" viewBox="0 0 9 9"><rect x=".5" y=".5" width="8" height="8" fill="#fff" stroke="#3a3a3a"/><path d="M2 4.5H7M4.5 2V7" stroke="#222"/></svg>
<svg class="a" style="left:368px;top:754px" width="9" height="9" viewBox="0 0 9 9"><rect x=".5" y=".5" width="8" height="8" fill="#fff" stroke="#3a3a3a"/><path d="M2 4.5H7M4.5 2V7" stroke="#222"/></svg>
<svg class="a" style="left:368px;top:802px" width="9" height="9" viewBox="0 0 9 9"><rect x=".5" y=".5" width="8" height="8" fill="#fff" stroke="#3a3a3a"/><path d="M2 4.5H7M4.5 2V7" stroke="#222"/></svg>
<svg class="a" style="left:368px;top:850px" width="9" height="9" viewBox="0 0 9 9"><rect x=".5" y=".5" width="8" height="8" fill="#fff" stroke="#3a3a3a"/><path d="M2 4.5H7M4.5 2V7" stroke="#222"/></svg>
<svg class="a" style="left:368px;top:178px" width="9" height="9" viewBox="0 0 9 9"><rect x=".5" y=".5" width="8" height="8" fill="#fff" stroke="#3a3a3a"/><path d="M2 4.5H7" stroke="#222"/></svg>
<div style="position:absolute;left:372px;top:187px;width:1px;height:524px;background:#444"></div>
<div style="position:absolute;left:372px;top:710px;width:5px;height:1px;background:#444"></div>
<div style="position:absolute;left:882px;top:126px;width:13px;height:16px;border:1px solid #000;background:#fff"></div><svg class="a" style="left:886px;top:137px" width="6" height="2" viewBox="0 0 6 2"><rect x="0" y="0" width="1.3" height="1.3" fill="#000"/><rect x="2" y="0" width="1.3" height="1.3" fill="#000"/><rect x="4" y="0" width="1.3" height="1.3" fill="#000"/></svg>
<div style="position:absolute;left:786px;top:750px;width:13px;height:16px;border:1px solid #000;background:#fff"></div><svg class="a" style="left:790px;top:761px" width="6" height="2" viewBox="0 0 6 2"><rect x="0" y="0" width="1.3" height="1.3" fill="#000"/><rect x="2" y="0" width="1.3" height="1.3" fill="#000"/><rect x="4" y="0" width="1.3" height="1.3" fill="#000"/></svg>
<div style="position:absolute;left:1154px;top:798px;width:13px;height:16px;border:1px solid #000;background:#fff"></div><svg class="a" style="left:1158px;top:809px" width="6" height="2" viewBox="0 0 6 2"><rect x="0" y="0" width="1.3" height="1.3" fill="#000"/><rect x="2" y="0" width="1.3" height="1.3" fill="#000"/><rect x="4" y="0" width="1.3" height="1.3" fill="#000"/></svg>
<div style="position:absolute;left:930px;top:846px;width:13px;height:16px;border:1px solid #000;background:#fff"></div><svg class="a" style="left:934px;top:857px" width="6" height="2" viewBox="0 0 6 2"><rect x="0" y="0" width="1.3" height="1.3" fill="#000"/><rect x="2" y="0" width="1.3" height="1.3" fill="#000"/><rect x="4" y="0" width="1.3" height="1.3" fill="#000"/></svg>
<div style="position:absolute;left:1571px;top:110px;width:17px;height:773px;background:#f8f7f2;border-left:1px solid #c8c0a0"></div>
<div style="position:absolute;left:1571px;top:110px;width:17px;height:21px;background:linear-gradient(90deg,#faf6f0,#eee8d4);border:1px solid #b8b090;border-top:none;border-right:none"></div>
<svg class="a" style="left:1576px;top:116px" width="8" height="7" viewBox="0 0 8 7"><path d="M4 0L7.5 7H.5Z" fill="#888"/></svg>
<div style="position:absolute;left:1571px;top:338px;width:17px;height:50px;background:linear-gradient(90deg,#f8f6ec,#ece6c8 60%,#ddd4a8);border:1px solid #b8b090;border-right:none"></div>
<div style="position:absolute;left:1571px;top:862px;width:17px;height:21px;background:linear-gradient(90deg,#faf6f0,#eee8d4);border:1px solid #b8b090;border-bottom:none;border-right:none"></div>
<svg class="a" style="left:1576px;top:870px" width="8" height="7" viewBox="0 0 8 7"><path d="M.5 0H7.5L4 7Z" fill="#888"/></svg>
<div style="position:absolute;left:348px;top:883px;width:1223px;height:17px;background:#f8f7f2;border-top:1px solid #c8c0a0"></div>
<div style="position:absolute;left:348px;top:883px;width:21px;height:17px;background:linear-gradient(180deg,#faf6f0,#eee8d4);border:1px solid #b8b090;border-left:none"></div>
<svg class="a" style="left:355px;top:888px" width="7" height="8" viewBox="0 0 7 8"><path d="M7 .5V7.5L0 4Z" fill="#c0c0c0"/></svg>
<div style="position:absolute;left:368px;top:883px;width:341px;height:17px;background:linear-gradient(180deg,#f8f6ec,#ece6c8 60%,#ddd4a8);border:1px solid #b8b090"></div>
<div style="position:absolute;left:1550px;top:883px;width:21px;height:17px;background:linear-gradient(180deg,#faf6f0,#eee8d4);border:1px solid #b8b090;border-right:none"></div>
<svg class="a" style="left:1558px;top:888px" width="7" height="8" viewBox="0 0 7 8"><path d="M0 .5V7.5L7 4Z" fill="#888"/></svg>
<div style="position:absolute;left:1571px;top:883px;width:18px;height:17px;background:#F4F1DC"></div>
<svg class="a" style="left:1576px;top:359px" width="6" height="6" viewBox="0 0 6 6"><circle cx="3" cy="3" r="2" fill="#f4f0e0" stroke="#b8b090" stroke-width=".8"/></svg>
<svg class="a" style="left:535px;top:888px" width="6" height="6" viewBox="0 0 6 6"><circle cx="3" cy="3" r="2" fill="#f4f0e0" stroke="#b8b090" stroke-width=".8"/></svg>
<svg class="a" style="left:331px;top:322px" width="6" height="6" viewBox="0 0 6 6"><circle cx="3" cy="3" r="2" fill="#f4f0e0" stroke="#b8b090" stroke-width=".8"/></svg>
<div style="position:absolute;left:1588px;top:108px;width:1px;height:792px;background:#fff"></div>
<div style="position:absolute;left:346px;top:899px;width:1243px;height:1px;background:#fff"></div>
<div style="position:absolute;left:4px;top:902px;width:172px;height:20px;background:#B8CFEA;border:1px solid #c4bc90"></div>
<svg class="a" style="left:8px;top:905px" width="12" height="14" viewBox="0 0 12 14"><path d="M.5 .5H8.5L11.5 3.5V13.5H.5Z" fill="#fff" stroke="#7890b0"/><path d="M2 4.5H7M2 6.5H10M2 8.5H10M2 10.5H10" stroke="#98b0cc"/></svg>
<div class="t" style="left:23px;top:905px;height:14px;line-height:14px;font-size:12px;transform:scaleX(.92);transform-origin:0 0;color:#1a1a1a">Общий модуль ГБ_...: Модуль</div>
<div style="position:absolute;left:3px;top:943px;width:1586px;height:1px;background:#fffef8"></div>
<div class="t" style="left:7px;top:927px;height:14px;line-height:14px;font-size:12px;transform:scaleX(.92);transform-origin:0 0;color:#2b2410">Копировать выбранную область в буфер обмена</div>
<div style="position:absolute;left:3px;top:924px;width:1260px;height:19px;border:1px solid #dcd8c0;border-left:none"></div>
<div style="position:absolute;left:1268px;top:924px;width:29px;height:19px;border:1px solid #dcd8c0"></div>
<div style="position:absolute;left:1302px;top:924px;width:33px;height:19px;border:1px solid #dcd8c0"></div>
<div style="position:absolute;left:1340px;top:924px;width:32px;height:19px;border:1px solid #dcd8c0"></div>
<div style="position:absolute;left:1376px;top:924px;width:24px;height:19px;border:1px solid #dcd8c0"></div>
<div style="position:absolute;left:1405px;top:924px;width:154px;height:19px;border:1px solid #dcd8c0"></div>
<div class="t" style="left:1271px;top:927px;height:14px;line-height:14px;font-size:12px;transform:scaleX(.92);transform-origin:0 0;color:#a09050">CAP</div>
<div class="t" style="left:1305px;top:927px;height:14px;line-height:14px;font-size:12px;transform:scaleX(.92);transform-origin:0 0;color:#2b2410">NUM</div>
<div class="t" style="left:1343px;top:927px;height:14px;line-height:14px;font-size:12px;transform:scaleX(.92);transform-origin:0 0;color:#a09050">OVR</div>
<div class="t" style="left:1379px;top:927px;height:14px;line-height:14px;font-size:12px;transform:scaleX(.92);transform-origin:0 0;color:#2b2410">ru</div>
<svg class="a" style="left:1391px;top:933px" width="8" height="5" viewBox="0 0 8 5"><path d="M0 0H8L4 4.5Z" fill="#3a2c08"/></svg>
<div class="t" style="left:1408px;top:927px;height:14px;line-height:14px;font-size:12px;transform:scaleX(.92);transform-origin:0 0;color:#2b2410">Стр: 468</div>
<div class="t" style="left:1485px;top:927px;height:14px;line-height:14px;font-size:12px;transform:scaleX(.92);transform-origin:0 0;color:#2b2410">Кол: 1</div>
<svg class="a" style="left:1575px;top:930px" width="13" height="13" viewBox="0 0 13 13"><path d="M12 1L1 12M12 5L5 12M12 9L9 12" stroke="#a8a080" stroke-width="1.2"/></svg>
<div style="position:absolute;left:0px;top:2px;width:3px;height:944px;background:#000"></div>
<div style="position:absolute;left:2px;top:2px;width:1px;height:942px;background:#222"></div>
<div style="position:absolute;left:1589px;top:2px;width:4px;height:944px;background:#000"></div>
<div style="position:absolute;left:0px;top:672px;width:2px;height:1px;background:#fff"></div>
<div style="position:absolute;left:0px;top:674px;width:2px;height:2px;background:#fff"></div>
<div style="position:absolute;left:0px;top:677px;width:2px;height:1px;background:#fff"></div>
</body></html>
